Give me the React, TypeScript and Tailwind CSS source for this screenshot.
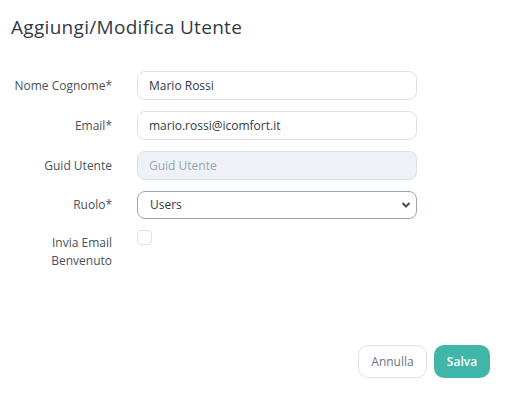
import { useState } from 'react'

export default function App() {
  const [nome, setNome] = useState('Mario Rossi')
  const [email, setEmail] = useState('mario.rossi@icomfort.it')
  const [ruolo, setRuolo] = useState('Users')
  const [invia, setInvia] = useState(false)

  const inputClass =
    'ml-[25px] h-[29px] w-[280px] rounded-lg border border-[#dee2e6] bg-white px-[11px] text-[12px] text-[#313a46] outline-none'

  return (
    <div
      className="h-[396px] w-[506px] bg-white text-[#313a46]"
      style={{ fontFamily: '"Open Sans", "Noto Sans", sans-serif' }}
    >
      <h4 className="px-[11px] pt-[14px] text-[19px] font-medium leading-[27px] tracking-[0.3px] text-[#313a46]">
        Aggiungi/Modifica Utente
      </h4>

      <div className="mt-[30px] flex flex-col gap-[11px]">
        <div className="flex items-center">
          <label className="w-[112px] text-right text-[12px] text-[#4a515b]">Nome Cognome*</label>
          <input className={inputClass} value={nome} onChange={e => setNome(e.target.value)} />
        </div>
        <div className="flex items-center">
          <label className="w-[112px] text-right text-[12px] text-[#4a515b]">Email*</label>
          <input className={inputClass} value={email} onChange={e => setEmail(e.target.value)} />
        </div>
        <div className="flex items-center">
          <label className="w-[112px] text-right text-[12px] text-[#4a515b]">Guid Utente</label>
          <input
            className="ml-[25px] h-[29px] w-[280px] rounded-lg border border-[#dee2e6] bg-[#eef2f7] px-[11px] text-[12px] placeholder:text-[#98a6ad] outline-none"
            placeholder="Guid Utente"
            disabled
          />
        </div>
        <div className="flex items-center">
          <label className="w-[112px] text-right text-[12px] text-[#4a515b]">Ruolo*</label>
          <div className="relative ml-[25px] h-[28px] w-[280px]">
            <select
              className="h-full w-full appearance-none rounded-lg border border-[#9aa5bd] bg-white px-[12px] text-[12px] text-[#313a46] outline-none"
              value={ruolo}
              onChange={e => setRuolo(e.target.value)}
            >
              <option>Users</option>
              <option>Admin</option>
            </select>
            <svg
              className="pointer-events-none absolute right-[6px] top-[9px]"
              width="10"
              height="10"
              viewBox="0 0 10 10"
            >
              <path d="M1.5 3 L5 6.5 L8.5 3" fill="none" stroke="#4a4a4a" strokeWidth="2" />
            </svg>
          </div>
        </div>
        <div className="flex items-start">
          <label className="w-[112px] pt-[4px] text-right text-[12px] leading-[18px] text-[#4a515b]">
            Invia Email
            <br />
            Benvenuto
          </label>
          <button
            className={`ml-[25px] h-[15px] w-[15px] rounded-[4px] border ${invia ? 'border-[#3fb6a8] bg-[#3fb6a8]' : 'border-[#dee2e6] bg-white'}`}
            onClick={() => setInvia(!invia)}
          />
        </div>
      </div>

      <div className="mt-[75px] flex justify-end gap-[7px] pr-[16px]">
        <button className="h-[33px] w-[69px] rounded-[10px] border border-[#dee2e6] bg-white text-[12px] font-medium text-[#6c757d]">
          Annulla
        </button>
        <button className="h-[33px] w-[56px] rounded-[10px] bg-[#3fb6a8] text-[12px] font-semibold text-white">
          Salva
        </button>
      </div>
    </div>
  )
}
